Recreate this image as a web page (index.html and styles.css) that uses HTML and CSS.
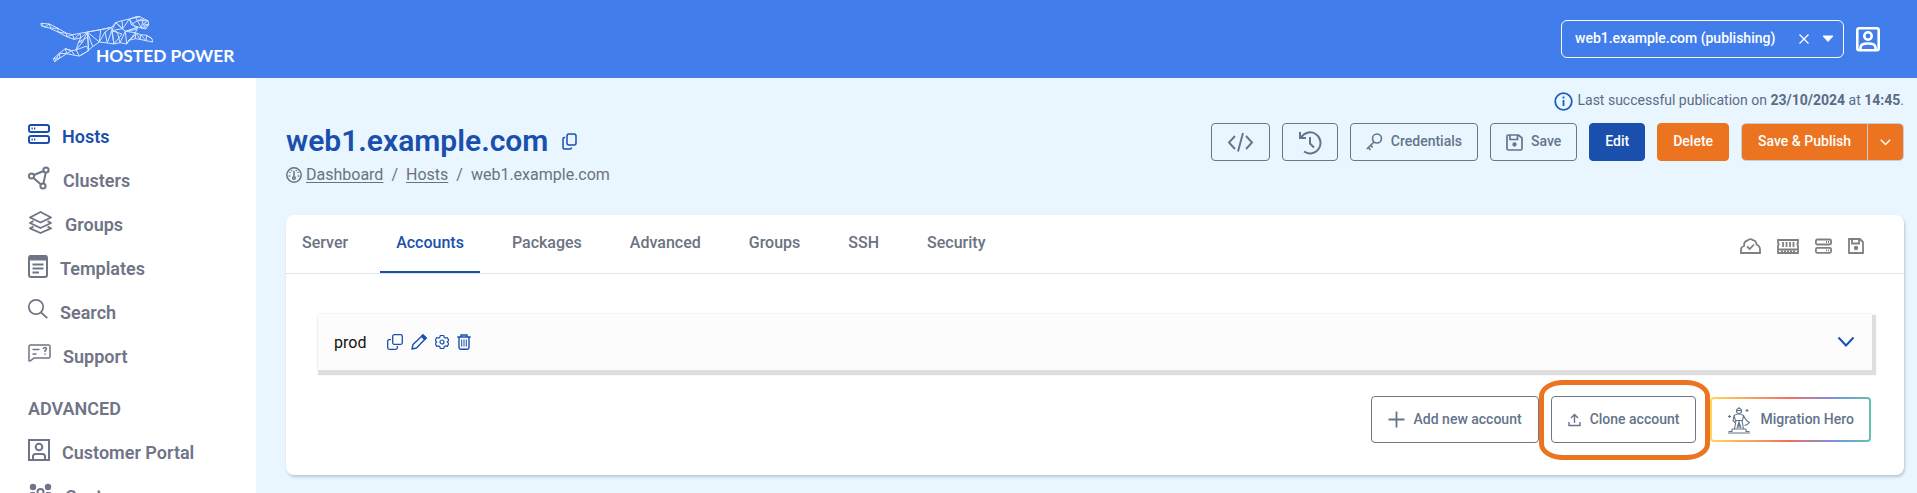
FILE: index.html
```html
<!DOCTYPE html>
<html lang="en">
<head>
<meta charset="utf-8">
<title>web1.example.com - Hosted Power</title>
<link rel="stylesheet" href="styles.css">
</head>
<body>
<header class="topbar">
  <a class="logo" href="#">
    <svg width="220" height="56" viewBox="0 -9 660 168" aria-label="Hosted Power">
      <g class="logo-lines">
        <path d="M33 28L58 30L84 43L110 58L128 62L150 58L172 54L212 47L245 40L257 26L276 20L298 15L316 9L330 8L340 14L354 20L356 32L347 45L334 42L324 39L316 56L332 62L350 64L366 74L368 84L348 80L330 76L316 74L296 79L290 90L270 86L252 90L232 87L208 84L188 98L166 116L148 126L134 124L110 119L90 132L74 143L70 134L88 118L106 104L124 110L138 108L146 84L152 72L132 76L110 68L84 54L58 42L34 36Z"/>
        <path d="M33 28L44 40L58 30L62 42L84 43L84 54L110 58L110 68L128 62L132 76L150 58L152 72L172 54L158 84L138 108L170 96L176 110L148 126L138 108M172 54L176 110L172 54L208 84L212 47L172 54M158 84L146 84L176 68M172 54L188 98M208 84L225 54L232 87L245 50L252 90L245 40L212 47M225 54L245 40M245 50L276 60L252 90M245 50L262 54L270 86L286 52L257 26L245 50M257 26L278 44L245 50M276 20L278 44L286 52L320 46L298 15L278 44M286 52L290 90L316 56L286 52L324 39L304 32L298 15L330 8L316 9L322 20L304 32M322 20L340 14L334 42L322 20L354 20L340 30L356 32L334 42M347 45L340 30M296 79L320 60L330 76L332 62L348 80L350 64L366 74M316 74L316 56M106 104L110 119L88 118L90 132L70 134M106 104L124 110L110 119M124 110L134 124M74 143L88 118"/>
      </g>
      <text class="logo-text" x="198" y="144">HOSTED POWER</text>
    </svg>
  </a>
  <div class="topbar-right">
    <div class="host-picker">
      <select aria-label="Host"><option>web1.example.com (publishing)</option></select>
      <button class="bare" aria-label="Clear"><svg width="12" height="12" viewBox="0 0 12 12"><path d="M1.500 1.500l9 9M10.500 1.500l-9 9" fill="none" stroke="currentColor" stroke-width="1.300"/></svg></button>
      <svg width="12" height="8" viewBox="0 0 12 8" aria-hidden="true"><path d="M1 1h10L6 6.500z" fill="currentColor" stroke="currentColor" stroke-linejoin="round"/></svg>
    </div>
    <button class="bare" aria-label="Profile"><svg width="24" height="25" viewBox="0 0 24 25" fill="none" stroke="currentColor" stroke-width="2.600"><rect x="1.300" y="1.300" width="21.400" height="22" rx="2"/><circle cx="12" cy="9" r="3.700"/><path d="M4.500 22v-1.500c0-2.500 2.500-4 7.500-4s7.500 1.500 7.500 4V22"/></svg></button>
  </div>
</header>
<div class="shell">
  <nav class="sidebar">
    <a class="nav-link active" href="#"><svg width="22" height="22" viewBox="0 0 22 22" fill="none" stroke="currentColor" stroke-width="2"><rect x="1" y="2" width="20" height="7" rx="2"/><rect x="1" y="13" width="20" height="7" rx="2"/><path d="M3.500 5.500h1.300M6 5.500h1.300M3.500 16.500h1.300M6 16.500h1.300"/></svg><span>Hosts</span></a>
    <a class="nav-link" href="#"><svg width="23" height="24" viewBox="0 0 23 24" fill="none" stroke="currentColor" stroke-width="2"><circle cx="3.500" cy="10" r="2.600"/><circle cx="18" cy="4" r="2.600"/><circle cx="15" cy="20" r="2.600"/><path d="M6 9l9.500-4M5.500 12l7.500 6.500M17.700 6.700L15.500 17.300"/></svg><span>Clusters</span></a>
    <a class="nav-link" href="#"><svg width="25" height="24" viewBox="0 0 25 24" fill="none" stroke="currentColor" stroke-width="1.900" stroke-linejoin="round"><path d="M12.500 2L23 7.500 12.500 12.500 2 7.500z"/><path d="M5.500 11L2 13l10.500 5L23 13l-3.500-2"/><path d="M5.500 16.500L2 18.300l10.500 4.700L23 18.300l-3.500-1.800"/></svg><span>Groups</span></a>
    <a class="nav-link" href="#"><svg width="20" height="24" viewBox="0 0 20 24" fill="none" stroke="currentColor" stroke-width="2"><rect x="1" y="2" width="18" height="21" rx="2"/><path d="M1 4h18" stroke-width="5"/><path d="M4.500 10.500h11M4.500 14.500h11M4.500 18.500h6.500" stroke-width="1.800"/></svg><span>Templates</span></a>
    <a class="nav-link" href="#"><svg width="20" height="26" viewBox="0 0 20 26" fill="none" stroke="currentColor" stroke-width="1.700"><circle cx="8" cy="10" r="7.200"/><path d="M13 15.500l6.300 5.700"/></svg><span>Search</span></a>
    <a class="nav-link" href="#"><svg width="23" height="22" viewBox="0 0 23 22" fill="none" stroke="currentColor" stroke-width="1.500"><path d="M1 18.500V3.500q0-1.500 1.500-1.500h18q1.500 0 1.500 1.500v10q0 1.500-1.500 1.500H6l-3.300 2.600q-1.700 1-1.700-.6z"/><path d="M4.500 6.500h7M4.500 11h4M15 6q.5-1.500 2-1.500t1.500 1.300-1.500 1.700V9M17 10.500v1.300"/></svg><span>Support</span></a>
    <h2 class="nav-heading">ADVANCED</h2>
    <a class="nav-link" href="#"><svg width="22" height="22" viewBox="0 0 22 22" fill="none" stroke="currentColor" stroke-width="2"><rect x="1" y="1" width="20" height="20"/><circle cx="11" cy="8" r="3.300"/><path d="M5 20v-2.500Q5 15 7.500 15h7q2.500 0 2.500 2.500V20"/></svg><span>Customer Portal</span></a>
    <a class="nav-link" href="#"><svg width="25" height="24" viewBox="0 0 25 24" fill="currentColor"><circle cx="5" cy="5" r="3.200"/><circle cx="20" cy="5" r="3.200"/><path d="M1 20v-7q0-3 3-3h3v10zM24 20v-7q0-3-3-3h-3v10z"/><circle cx="12.500" cy="10" r="3" fill="none" stroke="currentColor" stroke-width="2"/></svg><span>Customers</span></a>
  </nav>
  <main class="content">
    <p class="publication"><svg width="19" height="19" viewBox="0 0 19 19" fill="none" stroke="currentColor" stroke-width="1.800"><circle cx="9.500" cy="9.500" r="8.300"/><path d="M9.500 8v6M9.500 4.600v1.900"/></svg><span>Last successful publication on <b>23/10/2024</b> at <b>14:45</b>.</span></p>
    <div class="page-head">
      <div>
        <div class="title-row">
          <h1>web1.example.com</h1>
          <button class="bare blue" aria-label="Copy name"><svg width="15" height="17" viewBox="0 0 15 17" fill="none" stroke="currentColor" stroke-width="1.500"><rect x="5" y="1" width="9" height="11" rx="2"/><path d="M3.200 4.500H2.500Q1 4.500 1 6v8.500Q1 16 2.500 16H8q1.500 0 1.500-1.500"/></svg></button>
        </div>
        <nav class="breadcrumb" aria-label="Breadcrumb"><svg width="16" height="16" viewBox="0 0 16 16" fill="none" stroke="currentColor" stroke-width="1.500"><circle cx="8" cy="8" r="7.200"/><path d="M8 4v5M3.500 5l1 .8M12.500 5l-1 .8M2.700 9h1.600M11.700 9h1.600M5.500 3l.5 1M10.500 3l-.5 1"/><circle cx="8" cy="11" r="1.300"/></svg><a href="#">Dashboard</a><i>/</i><a href="#">Hosts</a><i>/</i><span>web1.example.com</span></nav>
      </div>
      <div class="actions">
        <button class="btn" aria-label="Code"><svg width="27" height="20" viewBox="0 0 27 20" fill="none" stroke="currentColor" stroke-width="1.900"><path d="M8 4L2 10.500 8 17M19 4l6 6.500L19 17M16 1l-5 18.500"/></svg></button>
        <button class="btn" aria-label="History"><svg width="24" height="25" viewBox="0 0 24 25" fill="none" stroke="currentColor" stroke-width="2"><path d="M2 2v6h6M3 7.500A10.500 10.500 0 1 1 6 21.500"/><path d="M12 7v6.500l4 4"/></svg></button>
        <button class="btn"><svg width="17" height="18" viewBox="0 0 17 18" fill="none" stroke="currentColor" stroke-width="1.600"><circle cx="11" cy="5.500" r="4.500"/><path d="M8 9l-7.200 7M2.500 14.500l2 2.500M5 12.500l1.600 2"/></svg><span>Credentials</span></button>
        <button class="btn"><svg width="17" height="17" viewBox="0 0 17 17" fill="none" stroke="currentColor" stroke-width="1.700"><path d="M3 1h9.500L16 4v10.500Q16 16 14.500 16h-12Q1 16 1 14.500V2.500Q1 1 3 1zM4 1v4.500h7.500V1"/><circle cx="8.500" cy="10.500" r="1.300" fill="currentColor"/></svg><span>Save</span></button>
        <button class="btn primary"><span>Edit</span></button>
        <button class="btn danger"><span>Delete</span></button>
        <div class="split"><button class="btn danger"><span>Save &amp; Publish</span></button><button class="btn danger more" aria-label="More publish options"><svg width="11" height="7" viewBox="0 0 11 7" fill="none" stroke="currentColor" stroke-width="1.500"><path d="M.8.8l4.700 4.700L10.200.8"/></svg></button></div>
      </div>
    </div>
    <section class="card">
      <div class="tabs">
        <a href="#">Server</a><a href="#" class="current">Accounts</a><a href="#">Packages</a><a href="#">Advanced</a><a href="#">Groups</a><a href="#">SSH</a><a href="#">Security</a>
        <div class="stats">
          <svg width="21" height="16" viewBox="0 0 21 16" fill="none" stroke="currentColor" stroke-width="1.800"><path d="M1 15V11.500Q1 9 4 8 4 3 7.500 2.500 10 0 13 2.200q3 .3 3.500 4.300Q20 8 20 11.500V15z"/><path d="M7 8.500l2.700 2.500L14 6.500"/></svg>
          <svg width="22" height="16" viewBox="0 0 22 16" fill="none" stroke="currentColor" stroke-width="1.800"><path d="M1 2h20v3q-1.500 1 0 2.500V15H1V7.500Q2.500 6 1 5zM1 11.500h20M6 4v5M9.500 4v5M13 4v5M16.500 4v5"/><path d="M4 13.500h14" stroke-dasharray="2 1"/></svg>
          <svg width="17" height="16" viewBox="0 0 17 16" fill="none" stroke="currentColor" stroke-width="1.800"><rect x=".9" y="1.500" width="15.200" height="5" rx="1.500"/><rect x=".9" y="9.800" width="15.200" height="5" rx="1.500"/><path d="M11 4h1M13 4h1M11 12.300h1M13 12.300h1"/></svg>
          <svg width="16" height="16" viewBox="0 0 16 16" fill="none" stroke="currentColor" stroke-width="1.800"><path d="M1 1h11l3 3v11H1zM4 1v4.500h7V1"/><circle cx="8" cy="10" r="1.300" fill="currentColor"/></svg>
        </div>
      </div>
      <div class="card-body">
        <div class="account">
          <span class="account-name">prod</span>
          <div class="account-tools">
            <button class="bare" aria-label="Duplicate"><svg width="16" height="16" viewBox="0 0 16 16" fill="none" stroke="currentColor" stroke-width="1.300"><rect x="5.700" y=".7" width="9.600" height="9.600" rx="1.500"/><path d="M4 5.700H2.200Q.7 5.700.7 7.200v6.600q0 1.500 1.500 1.500h6.600q1.500 0 1.500-1.500V12"/></svg></button>
            <button class="bare" aria-label="Edit"><svg width="16" height="16" viewBox="0 0 16 16" fill="none" stroke="currentColor" stroke-width="1.400" stroke-linejoin="round"><path d="M1 15l1-4.500L12 .9 15.100 4 5.500 14z"/><path d="M10.500 2.300L12 .9 15.100 4l-1.400 1.500z" fill="currentColor"/></svg></button>
            <button class="bare" aria-label="Settings"><svg width="14" height="16" viewBox="0 0 14 16" fill="none" stroke="currentColor" stroke-width="1.200" stroke-linejoin="round"><path d="M5.300 1.500h3.400l.5 1.900 1.200.7 1.900-.6 1.500 2.900L12.300 8l1.500 1.600-1.500 2.900-1.900-.6-1.200.7-.5 1.900H5.300l-.5-1.900-1.200-.7-1.900.6L.2 9.600 1.700 8 .2 6.400l1.500-2.900 1.900.6 1.200-.7z"/><circle cx="7" cy="8" r="2"/></svg></button>
            <button class="bare" aria-label="Remove"><svg width="14" height="16" viewBox="0 0 14 16" fill="none" stroke="currentColor" stroke-width="1.400"><path d="M.3 3h13.400M4 3V1h6v2M2 3v10.500q0 1.700 1.700 1.700h6.600q1.700 0 1.700-1.700V3"/><path d="M4.700 5.500v7M7 5.500v7M9.300 5.500v7" stroke-width="1"/></svg></button>
          </div>
          <button class="bare expand" aria-label="Expand"><svg width="18" height="12" viewBox="0 0 18 12" fill="none" stroke="currentColor" stroke-width="2"><path d="M1.500 1.500L9 9.500l7.500-8"/></svg></button>
        </div>
        <div class="account-actions">
          <button class="btn tall"><svg width="17" height="17" viewBox="0 0 17 17" fill="none" stroke="currentColor" stroke-width="1.800"><path d="M8.500.5v16M.5 8.500h16"/></svg><span>Add new account</span></button>
          <div class="highlight"><button class="btn tall"><svg width="13" height="14" viewBox="0 0 13 14" fill="none" stroke="currentColor" stroke-width="1.400"><path d="M6.500 10V2M3 5l3.500-3.500L10 5M1 9v3.500h11V9"/></svg><span>Clone account</span></button></div>
          <button class="btn tall rainbow"><svg width="24" height="28" viewBox="0 0 24 28" fill="none" stroke="currentColor" stroke-width="1.100"><circle cx="12" cy="5" r="2.500"/><path d="M9.500 4.500h5M12 1v1.500M7 9.500q5-3 9.500 0l-1 5H8.500zM7 9.500l-1 5 2 2M16.500 9.500q2 5 6 7-2 2.500-5 3M9 14.500L7.500 23M15 14.500l1.500 8.500M12 15v7M10 22l2-6 2 6M5 23h14M5 23v2.500H1.500M19 23v2.500h3.500M1 27h22M20 3v3M18.500 4.500h3M2.500 9v3M1 10.500h3"/></svg><span>Migration Hero</span></button>
        </div>
      </div>
    </section>
  </main>
</div>
</body>
</html>
```
FILE: styles.css
```css
* { box-sizing: border-box; }
html, body { height: 100%; }
body {
  margin: 0;
  display: flex;
  flex-direction: column;
  overflow: hidden;
  background: #e9f6ff;
  color: #6b7280;
  font-family: Roboto, "Liberation Sans", sans-serif;
  font-size: 16px;
}
svg { display: block; flex: none; }
button, select { font: inherit; color: inherit; cursor: pointer; }
.bare { padding: 0; border: 0; background: none; }
.blue { color: #1a4fae; }

.topbar {
  flex: none;
  display: flex;
  align-items: center;
  justify-content: space-between;
  height: 78px;
  padding: 0 37px 0 30px;
  background: #427eeb;
  color: #fff;
}
.logo-lines { fill: none; stroke: #d5e6ff; stroke-width: 3; stroke-linejoin: round; }
.logo-text { fill: #fff; font-family: Lato, sans-serif; font-weight: 700; font-size: 52px; }
.topbar-right { display: flex; align-items: center; gap: 12px; }
.host-picker {
  display: flex;
  align-items: center;
  gap: 12px;
  width: 283px;
  height: 38px;
  padding: 0 9px 0 13px;
  border: 1px solid #fff;
  border-radius: 6px;
}
.host-picker select {
  flex: 1;
  min-width: 0;
  padding: 0 0 2px;
  border: 0;
  appearance: none;
  background: none;
  font-size: 14px;
  font-weight: 500;
}

.shell { flex: 1; min-height: 0; display: flex; }
.sidebar {
  flex: none;
  width: 256px;
  padding: 36px 28px 0;
  overflow: hidden;
  background: #fff;
  color: #6f7486;
}
.nav-link {
  display: flex;
  align-items: center;
  gap: 12px;
  height: 44px;
  color: inherit;
  font-size: 18px;
  font-weight: 600;
  text-decoration: none;
}
.nav-link svg { margin-bottom: 4px; }
.nav-link.active { color: #1a4fae; }
.nav-heading { margin: 0; font-size: 18px; font-weight: 600; line-height: 62px; height: 52px; }

.content { flex: 1; min-width: 0; padding: 12px 13px 18px 30px; }
.publication {
  display: flex;
  align-items: center;
  justify-content: flex-end;
  gap: 4px;
  margin: 0;
  height: 22px;
  color: #5b6b85;
  font-size: 14px;
}
.publication svg { color: #1a5fc0; }
.publication span { padding-bottom: 2px; }
.page-head { display: flex; justify-content: space-between; margin-top: 11px; }
.title-row { display: flex; align-items: center; gap: 14px; height: 36px; }
h1 { margin: 0; color: #1a4fae; font-size: 30px; font-weight: 600; line-height: 36px; }
.breadcrumb { display: flex; align-items: center; gap: 4px; line-height: 32px; }
.breadcrumb a { color: inherit; text-underline-offset: 2px; }
.breadcrumb i { padding: 0 4px; font-style: normal; }
.actions { display: flex; align-items: flex-start; gap: 12px; }
.btn {
  display: flex;
  align-items: center;
  justify-content: center;
  gap: 8px;
  height: 38px;
  padding: 0 15px;
  border: 1px solid #6f7486;
  border-radius: 4px;
  background: transparent;
  color: #64748b;
  font-size: 14px;
  font-weight: 500;
  white-space: nowrap;
}
.btn span { padding-bottom: 2px; }
.btn.primary { border-color: #1a4fae; background: #1a4fae; color: #fff; }
.btn.danger { border-color: #ec731f; background: #ec731f; color: #fff; }
.split { display: flex; border: 1px solid #c9cdd3; border-radius: 5px; overflow: hidden; }
.split .btn { height: 36px; padding: 0 16px; border: 0; border-radius: 0; }
.split .more { padding: 0 12px; border-left: 1px solid #c9cdd3; }

.card {
  margin-top: 24px;
  border-radius: 8px;
  background: #fff;
  box-shadow: 1px 2px 3px #b8c7d6;
}
.tabs { display: flex; gap: 16px; height: 59px; border-bottom: 1px solid #dfe3ec; }
.tabs a {
  padding: 0 16px;
  border-bottom: 2px solid transparent;
  color: inherit;
  font-weight: 500;
  line-height: 56px;
  text-decoration: none;
}
.tabs .current { border-color: #1a4fae; color: #1a4fae; }
.stats { display: flex; align-items: center; gap: 16px; margin-left: auto; padding: 4px 40px 0 0; color: #808080; }
.card-body { padding: 40px 32px 32px; }
.account {
  display: flex;
  align-items: center;
  height: 56px;
  padding: 0 17px 0 16px;
  background: #fcfcfc;
  box-shadow: 2px 3px 1px 2px #dedede, 0 0 2px #e4e4e4;
  color: #1a4fae;
}
.account-name { color: #111; }
.account-tools { display: flex; gap: 8px; margin-left: 21px; }
.expand { margin-left: auto; }
.account-actions { display: flex; justify-content: flex-end; align-items: center; gap: 12px; margin-top: 26px; padding-right: 1px; }
.btn.tall { gap: 9px; height: 47px; padding: 0 16px; }
.highlight { position: relative; margin-right: 2px; }
.highlight::after {
  content: "";
  position: absolute;
  inset: -16px -14px -17px -12px;
  border: 5px solid #ec731f;
  border-radius: 24px / 16px;
  pointer-events: none;
}
.btn.rainbow {
  height: 45px;
  padding: 0 15px;
  border: 2px solid transparent;
  background: linear-gradient(#fff, #fff) padding-box, linear-gradient(90deg, #ffd75a, #f7a35c 25%, #f46d63 50%, #7a8fe0 76%, #62c2b0) border-box;
}
```
